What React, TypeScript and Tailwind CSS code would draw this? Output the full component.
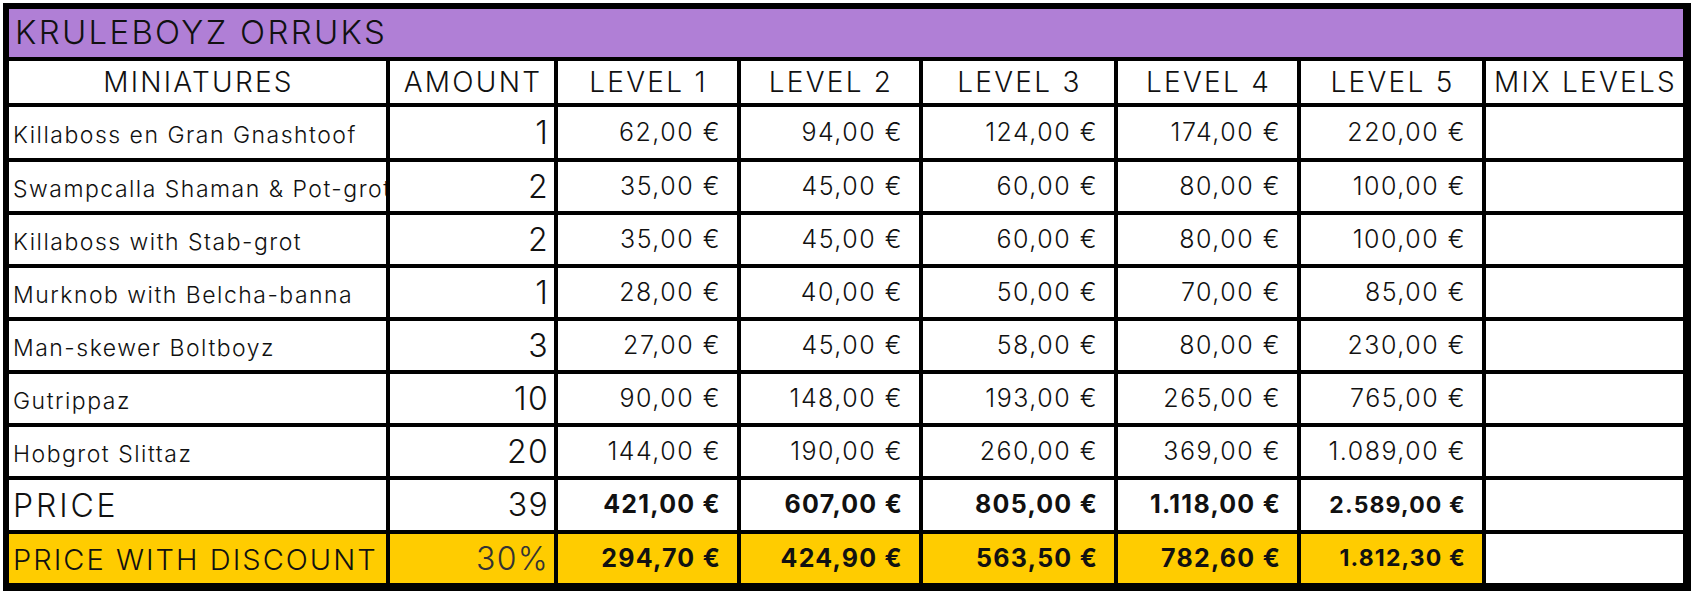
import React from 'react'

const rows = [
  ['Killaboss en Gran Gnashtoof', '1', '62,00 €', '94,00 €', '124,00 €', '174,00 €', '220,00 €'],
  ['Swampcalla Shaman & Pot-grot', '2', '35,00 €', '45,00 €', '60,00 €', '80,00 €', '100,00 €'],
  ['Killaboss with Stab-grot', '2', '35,00 €', '45,00 €', '60,00 €', '80,00 €', '100,00 €'],
  ['Murknob with Belcha-banna', '1', '28,00 €', '40,00 €', '50,00 €', '70,00 €', '85,00 €'],
  ['Man-skewer Boltboyz', '3', '27,00 €', '45,00 €', '58,00 €', '80,00 €', '230,00 €'],
  ['Gutrippaz', '10', '90,00 €', '148,00 €', '193,00 €', '265,00 €', '765,00 €'],
  ['Hobgrot Slittaz', '20', '144,00 €', '190,00 €', '260,00 €', '369,00 €', '1.089,00 €'],
]

const headers = ['MINIATURES', 'AMOUNT', 'LEVEL 1', 'LEVEL 2', 'LEVEL 3', 'LEVEL 4', 'LEVEL 5', 'MIX LEVELS']

const prices = ['421,00 €', '607,00 €', '805,00 €', '1.118,00 €', '2.589,00 €']
const discounted = ['294,70 €', '424,90 €', '563,50 €', '782,60 €', '1.812,30 €']

const App = () => {
  return (
    <div className="bg-white w-[1693px] h-[595px] p-[3px] font-['Inter',sans-serif] text-[#111]">
      <div className="grid w-fit grid-cols-[377px_164px_179px_178px_191px_179px_181px_197px] grid-rows-[48px_42px_51px_49px_49px_49px_49px_49px_49px_50px_49px] gap-[4px] bg-black pt-[6px] pl-[6px] pr-[8px] pb-[8px]">
        <div className="col-span-8 flex items-center bg-[#b07fd6] pl-[6px] text-[33px] font-light tracking-[0.07em]">
          KRULEBOYZ ORRUKS
        </div>

        {headers.map((h) => (
          <div
            key={h}
            className="flex items-center justify-center overflow-hidden whitespace-nowrap bg-white pl-[2px] text-[28px] font-light tracking-[0.08em]"
          >
            {h}
          </div>
        ))}

        {rows.map((r) => (
          <React.Fragment key={r[0]}>
            <div className="flex items-center overflow-hidden whitespace-nowrap bg-white pl-[4px] pt-[6px] text-[23px] font-light tracking-[0.065em]">
              {r[0]}
            </div>
            <div className="flex items-center justify-end bg-white pr-[5px] text-[32px] font-light tracking-[0.04em]">
              {r[1]}
            </div>
            {r.slice(2).map((v, i) => (
              <div key={i} className="flex items-center justify-end bg-white pr-[16px] text-[25px] font-light tracking-[0.06em]">
                {v}
              </div>
            ))}
            <div className="bg-white" />
          </React.Fragment>
        ))}

        <div className="flex items-center bg-white pl-[4px] pt-[2px] text-[32px] font-light tracking-[0.09em]">PRICE</div>
        <div className="flex items-center justify-end bg-white pr-[5px] text-[32px] font-light tracking-[0.04em]">39</div>
        {prices.map((v, i) => (
          <div
            key={v}
            className={`flex items-center justify-end bg-white pr-[16px] font-bold tracking-[0.05em] ${i === 4 ? 'text-[23px]' : 'text-[25px]'}`}
          >
            {v}
          </div>
        ))}
        <div className="bg-white" />

        <div className="flex items-center whitespace-nowrap bg-[#ffcc00] pl-[4px] pt-[2px] text-[29px] font-light tracking-[0.07em]">
          PRICE WITH DISCOUNT
        </div>
        <div className="flex items-center justify-end bg-[#ffcc00] pr-[5px] text-[32px] font-light tracking-[0.04em] text-[#333]">
          30%
        </div>
        {discounted.map((v, i) => (
          <div
            key={v}
            className={`flex items-center justify-end bg-[#ffcc00] pr-[16px] font-bold tracking-[0.05em] ${i === 4 ? 'text-[23px]' : 'text-[25px]'}`}
          >
            {v}
          </div>
        ))}
        <div className="bg-white" />
      </div>
    </div>
  )
}

export default App
